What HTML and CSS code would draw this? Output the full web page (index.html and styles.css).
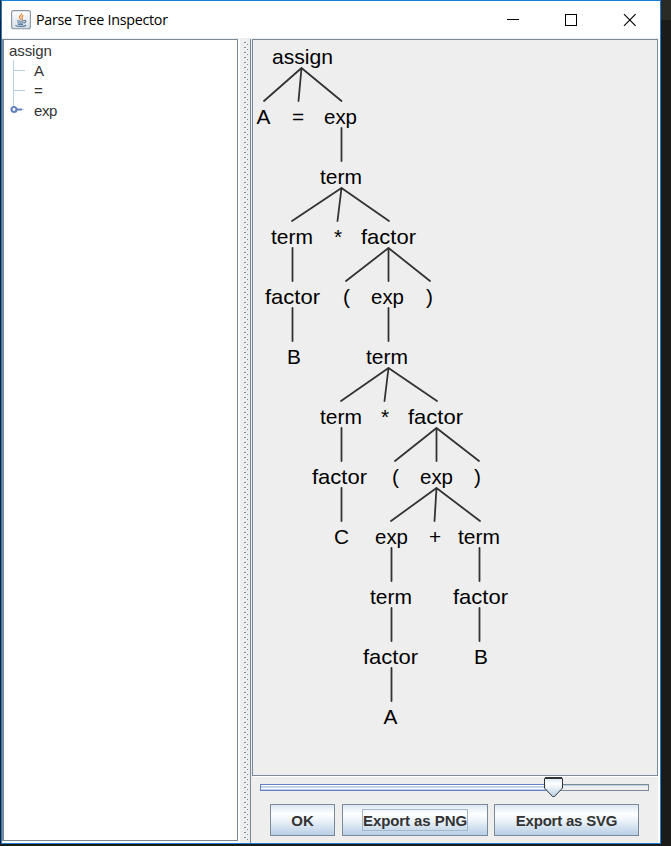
FILE: index.html
```html
<!DOCTYPE html>
<html lang="en">
<head>
<meta charset="utf-8">
<title>Parse Tree Inspector</title>
<link rel="stylesheet" href="styles.css">
</head>
<body>
<main class="window">
  <header class="titlebar">
    <svg class="app-icon" width="20" height="20" viewBox="0 0 20 20">
      <defs><linearGradient id="tile" x2="0" y2="1"><stop offset="0" stop-color="#fff"/><stop offset="1" stop-color="#d3dce4"/></linearGradient></defs>
      <rect x=".6" y=".6" width="18.8" height="18.2" rx="2" fill="url(#tile)" stroke="#8796a5" stroke-width="1.1"/>
      <path d="M10.8 3c.5 2-3 2.600-2.200 4.700.3.800 1 1.100 1 2M12.500 5.500c-1.800 1-2.300 1.800-1.200 3 .4.600.1 1-.4 1.500" fill="none" stroke="#e88433" stroke-width="1.200"/>
      <path d="M6 10.500c2 .8 5 .8 7.300 0M6.500 12.500c2 .8 4 .8 6 0M7 14.200c2 .7 3.500.7 5 0M13.300 10.500c2.500-.3 1.800 2-.5 2.700M4.500 15.300c1.800 1.500 8.500 1.500 10.700 0" fill="none" stroke="#567a9c" stroke-width="1.100"/>
    </svg>
    <h1 class="title">Parse Tree Inspector</h1>
    <svg class="controls" width="132" height="14" viewBox="0 0 132 14" fill="none" stroke="#000">
      <path d="M1 6.500h12" shape-rendering="crispEdges"/>
      <rect x="59.500" y="1.500" width="11" height="11"/>
      <path d="M118 1.200l11.600 11.600M129.600 1.200L118 12.800" stroke-width="1.150"/>
    </svg>
  </header>
  <div class="content">
    <section class="outline">
      <div class="root">assign</div>
      <ul class="branch">
        <li>A</li>
        <li>=</li>
        <li class="collapsed">exp<svg class="handle" width="14" height="9" viewBox="0 0 14 9"><path d="M6 4.500h6" stroke="#6382bf" stroke-width="2"/><path d="M12 4.500h2" stroke="#b8cfe5"/><circle cx="4" cy="4.500" r="2.500" fill="#fff" stroke="#6382bf" stroke-width="2.200"/></svg></li>
      </ul>
    </section>
    <div class="divider"><svg width="10" height="803"><defs><pattern id="bumps" x="3" y="2" width="7" height="5" patternUnits="userSpaceOnUse"><path d="M0 0h1v1h-1zM3 2h1v1h-1z" fill="#fff"/><path d="M1 1h2v1h-2zM4 3h1v1h-1z" fill="#7a8a99"/></pattern></defs><rect x="3" y="2" width="6" height="799" fill="url(#bumps)"/></svg></div>
    <section class="viewer">
      <div class="canvas">
        <svg class="tree" width="404" height="735" viewBox="253 40 404 735">
          <g class="edges">
            <path d="M264 101L301.500 68L341.500 101M301.500 68L298.500 101"/>
            <path d="M341.500 128V161"/>
            <path d="M292 221L341.500 188L389 221M341.500 188L337.500 221"/>
            <path d="M292.500 248V281M292.500 308V341"/>
            <path d="M346 281L388.500 248L430 281M388.500 248V281M388.500 308V341"/>
            <path d="M341 401L388.500 368L437 401M388.500 368L384.500 401"/>
            <path d="M341.500 428V461M341.500 488V521"/>
            <path d="M395 461L436.500 428L479 461M436.500 428V461"/>
            <path d="M391 521L436.500 488L480 521M436.500 488L434.500 521"/>
            <path d="M391.500 548V581M391.500 608V641M391.500 668V701"/>
            <path d="M479.500 548V581M479.500 608V641"/>
          </g>
          <g class="labels">
            <text x="272" y="64" textLength="61" lengthAdjust="spacingAndGlyphs">assign</text>
            <text x="256.500" y="124">A</text><text x="292" y="124">=</text><text x="324" y="124" textLength="33" lengthAdjust="spacingAndGlyphs">exp</text>
            <text x="320" y="184" textLength="42" lengthAdjust="spacingAndGlyphs">term</text>
            <text x="271" y="244" textLength="42" lengthAdjust="spacingAndGlyphs">term</text><text x="334" y="244">*</text><text x="361" y="244" textLength="55" lengthAdjust="spacingAndGlyphs">factor</text>
            <text x="265" y="304" textLength="55" lengthAdjust="spacingAndGlyphs">factor</text><text x="343" y="304">(</text><text x="371" y="304" textLength="33" lengthAdjust="spacingAndGlyphs">exp</text><text x="426" y="304">)</text>
            <text x="287" y="364">B</text><text x="366" y="364" textLength="42" lengthAdjust="spacingAndGlyphs">term</text>
            <text x="320" y="424" textLength="42" lengthAdjust="spacingAndGlyphs">term</text><text x="381" y="424">*</text><text x="408" y="424" textLength="55" lengthAdjust="spacingAndGlyphs">factor</text>
            <text x="312" y="484" textLength="55" lengthAdjust="spacingAndGlyphs">factor</text><text x="392" y="484">(</text><text x="420" y="484" textLength="33" lengthAdjust="spacingAndGlyphs">exp</text><text x="474" y="484">)</text>
            <text x="334" y="544">C</text><text x="375" y="544" textLength="33" lengthAdjust="spacingAndGlyphs">exp</text><text x="429" y="544">+</text><text x="458" y="544" textLength="42" lengthAdjust="spacingAndGlyphs">term</text>
            <text x="370" y="604" textLength="42" lengthAdjust="spacingAndGlyphs">term</text><text x="453" y="604" textLength="55" lengthAdjust="spacingAndGlyphs">factor</text>
            <text x="363" y="664" textLength="55" lengthAdjust="spacingAndGlyphs">factor</text><text x="474" y="664">B</text>
            <text x="383.500" y="724">A</text>
          </g>
        </svg>
      </div>
      <div class="slider">
        <div class="track"><div class="fill"></div></div>
        <svg class="thumb" width="19" height="21" viewBox="0 0 19 21"><defs><linearGradient id="knob" x2="0" y2="1"><stop offset="0" stop-color="#dce8f3"/><stop offset=".3" stop-color="#fff"/><stop offset="1" stop-color="#b8cfe5"/></linearGradient></defs><path d="M.5 1.500H18.500V11L10.500 19.500H8.500L.5 11z" fill="url(#knob)" stroke="#333"/><path d="M1 1h17" stroke="#333" stroke-width="2"/></svg>
      </div>
      <div class="buttons">
        <button class="button ok">OK</button>
        <button class="button png"><span class="focus">Export as PNG</span></button>
        <button class="button svg">Export as SVG</button>
      </div>
    </section>
  </div>
</main>
</body>
</html>
```
FILE: styles.css
```css
* { box-sizing: border-box; }
body {
  margin: 0;
  height: 846px;
  padding-left: 1px;
  overflow: hidden;
  background: linear-gradient(#2b2b26 20px, #1b1b19 20px);
  font-family: "Liberation Sans", sans-serif;
  color: #333;
}
.window {
  width: 660px;
  height: 844px;
  border: 1px solid #1a7fd4;
  background: #fff;
}
.titlebar {
  display: flex;
  align-items: center;
  height: 37px;
  padding: 0 22px 0 9px;
}
.title {
  margin: 0 auto 0 5px;
  font: 14.3px "Open Sans", "Noto Sans", sans-serif;
  color: #000;
  letter-spacing: -.27px;
}
.content {
  display: flex;
  height: 805px;
  border-top: 1px solid #eee;
}
.outline {
  width: 236px;
  height: 802px;
  margin-right: 2px;
  padding: 2px 0 0 5px;
  border: 1px solid #7a8a99;
  border-left-width: 2px;
  font-size: 15px;
}
.root { height: 18px; line-height: 17px; letter-spacing: -.1px; }
.branch {
  margin: 0 0 0 4px;
  padding: 0;
  list-style: none;
  background: linear-gradient(#b8cfe5, #b8cfe5) 0 0 / 1px 48px no-repeat;
}
.branch li {
  position: relative;
  height: 20px;
  line-height: 21px;
  padding-left: 21px;
  background: linear-gradient(#b8cfe5, #b8cfe5) 0 10px / 12px 1px no-repeat;
}
.branch .collapsed { background: none; letter-spacing: -.4px; }
.handle { position: absolute; left: -3px; top: 5px; }
.divider { width: 10px; background: #eee; }
.divider svg { display: block; }
.viewer {
  width: 408px;
  height: 804px;
  border-left: 1px solid #7a8a99;
  background: #eee;
  display: flex;
  flex-direction: column;
}
.canvas {
  width: 406px;
  height: 737px;
  margin-left: 1px;
  border: 1px solid #7a8a99;
  box-shadow: 1px 1px #fff;
}
.tree { display: block; }
.edges { fill: none; stroke: #333; stroke-width: 1.800; stroke-linejoin: round; stroke-linecap: round; }
.labels { font-size: 20.800px; fill: #000; }
.slider { position: relative; height: 28px; padding: 8px 0 0 9px; }
.track { width: 389px; height: 7px; border: 1px solid #7a8a99; box-shadow: inset 0 1px #b8cfe5; }
.fill {
  width: 288px;
  height: 7px;
  margin: -1px;
  border: 1px solid #6382bf;
  background: linear-gradient(#fff 1px, #b8cfe5 1px 2px, #c9dbec 2px 3px, #fff 3px 4px, #b8cfe5 4px);
}
.thumb { position: absolute; left: 293px; top: 1px; }
.buttons { display: flex; padding-left: 19px; height: 32px; }
.button {
  height: 32px;
  padding: 0;
  border: 1px solid #7a8a99;
  border-radius: 0;
  background: linear-gradient(#dde8f3, #fff 30%, #f0f5fa 48%, #b8cfe5);
  font: bold 15px "Liberation Sans", sans-serif;
  color: #333;
}
.ok { width: 65px; margin-right: 7px; }
.png { width: 146px; margin-right: 6px; }
.svg { width: 145px; letter-spacing: -.22px; }
.focus { display: block; margin: 0 auto; height: 22px; line-height: 22px; width: 106px; border: 1px solid #a3b8cc; white-space: nowrap; letter-spacing: -.08px; }
```
